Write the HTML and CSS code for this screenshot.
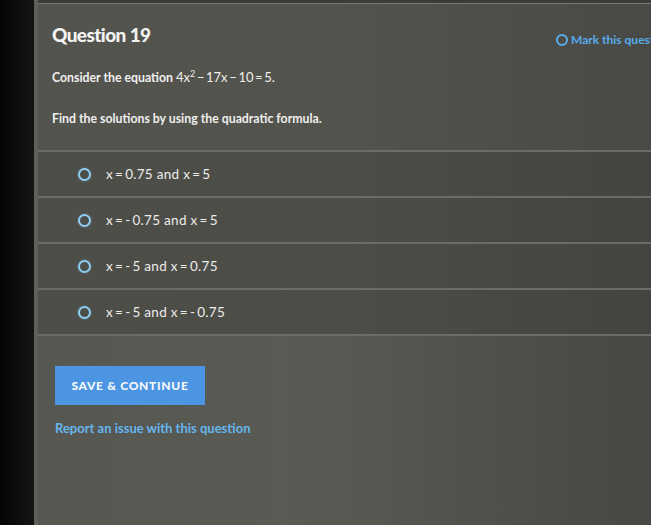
FILE: index.html
```html
<!DOCTYPE html>
<html>
<head>
<meta charset="utf-8">
<link rel="stylesheet" href="styles.css">
</head>
<body>
<div class="screen">
  <div class="bezel"></div>
  <div class="edge"></div>
  <div class="panel">
    <div class="topstrip"></div>
    <div class="content">
      <div class="head">
        <h1 class="title">Question 19</h1>
        <div class="mark"><span class="mark-circle"></span><span>Mark this question</span></div>
      </div>
      <p class="prompt">Consider the equation <span class="math">4x<sup>2</sup>&thinsp;&minus;&thinsp;17x&thinsp;&minus;&thinsp;10&thinsp;=&thinsp;5.</span></p>
      <p class="prompt find">Find the solutions by using the quadratic formula.</p>
    </div>
    <div class="options">
      <div class="option"><span class="radio"></span><span class="opt-text">x&thinsp;=&thinsp;0.75 and x&thinsp;=&thinsp;5</span></div>
      <div class="option"><span class="radio"></span><span class="opt-text">x&thinsp;=&thinsp;-&thinsp;0.75 and x&thinsp;=&thinsp;5</span></div>
      <div class="option"><span class="radio"></span><span class="opt-text">x&thinsp;=&thinsp;-&thinsp;5 and x&thinsp;=&thinsp;0.75</span></div>
      <div class="option"><span class="radio"></span><span class="opt-text">x&thinsp;=&thinsp;-&thinsp;5 and x&thinsp;=&thinsp;-&thinsp;0.75</span></div>
    </div>
    <div class="actions">
      <button class="save">SAVE &amp; CONTINUE</button>
      <a class="report">Report an issue with this question</a>
    </div>
  </div>
</div>
</body>
</html>
```

FILE: styles.css
```css
html, body {
  margin: 0;
  padding: 0;
  width: 651px;
  height: 525px;
  overflow: hidden;
  background: #0b0b0b;
}

.screen {
  display: flex;
  width: 651px;
  height: 525px;
  font-family: Lato, "Open Sans", sans-serif;
}

.bezel {
  width: 34px;
  background: linear-gradient(90deg, #050505, #141414);
}

.edge {
  width: 4px;
  background: #5e5e5a;
}

.panel {
  flex: 1;
  display: flex;
  flex-direction: column;
  background: linear-gradient(90deg, #54544f 0%, #53534e 50%, #494a45 100%);
  overflow: hidden;
}

.topstrip {
  height: 3px;
  background: #3b3c38;
  border-bottom: 1px solid #7a7a75;
}

.content {
  padding: 0 0 0 14px;
}

.head {
  display: flex;
  justify-content: space-between;
  align-items: flex-start;
  margin-top: 20px;
  height: 30px;
}

.title {
  margin: 0;
  font-size: 19px;
  line-height: 22px;
  font-weight: 900;
  color: #f2f2f0;
  letter-spacing: -0.6px;
}

.mark {
  display: flex;
  align-items: center;
  gap: 3px;
  margin-top: 9px;
  margin-right: -75px;
  width: 170px;
  font-size: 12px;
  line-height: 14px;
  font-weight: 700;
  color: #57abeb;
  white-space: nowrap;
}

.mark-circle {
  width: 8px;
  height: 8px;
  border: 2px solid #5aaeed;
  border-radius: 50%;
}

.prompt {
  margin: 14px 0 0 0;
  font-size: 12.3px;
  font-weight: 700;
  color: #efefed;
  height: 18px;
  line-height: 18px;
}

.math {
  font-weight: 400;
  font-size: 13px;
}

.math sup {
  font-size: 9px;
  line-height: 0;
}

.find {
  margin-top: 24px;
}

.options {
  margin-top: 22px;
  border-top: 2px solid #6c6c67;
}

.option {
  display: flex;
  align-items: center;
  height: 44px;
  padding-left: 40px;
  border-bottom: 2px solid #6c6c67;
  background: rgba(0, 0, 0, 0.07);
}

.radio {
  width: 9px;
  height: 9px;
  border: 2px solid #8fcff3;
  border-radius: 50%;
  margin-right: 15px;
  box-shadow: 0 0 2px rgba(120, 190, 240, 0.6);
}

.opt-text {
  font-size: 13.5px;
  letter-spacing: 0.3px;
  font-weight: 400;
  color: #ececea;
}

.actions {
  display: flex;
  flex-direction: column;
  align-items: flex-start;
  padding-left: 17px;
  padding-top: 30px;
  flex: 1;
  background: linear-gradient(90deg, rgba(255,255,255,0.02), rgba(255,255,255,0.04) 40%, rgba(0,0,0,0.03));
}

.save {
  width: 150px;
  height: 39px;
  border: none;
  background: #4b95e2;
  color: #f4f8fc;
  font-family: Lato, "Open Sans", sans-serif;
  font-size: 12px;
  font-weight: 900;
  letter-spacing: 0.7px;
  padding: 0;
}

.report {
  margin-top: 15px;
  font-size: 13px;
  font-weight: 700;
  color: #65b5ec;
}
```
